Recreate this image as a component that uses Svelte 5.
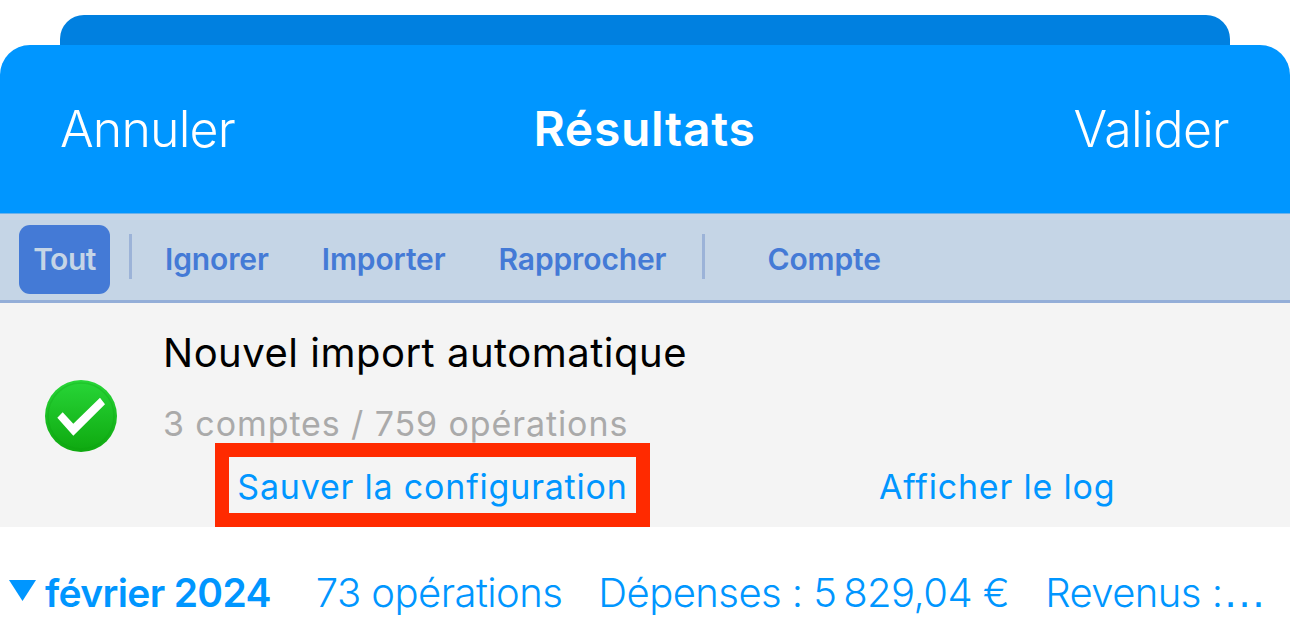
<script>
	// toolbar filters, first group is the selected one
	const filters = ["Ignorer", "Importer", "Rapprocher"];
</script>

<div class="page">
	<div class="sheet-back"></div>

	<header class="nav">
		<span class="nav-btn">Annuler</span>
		<span class="nav-title">Résultats</span>
		<span class="nav-btn right">Valider</span>
	</header>

	<div class="toolbar">
		<span class="tout">Tout</span>
		<span class="sep first"></span>
		<div class="filters">
			{#each filters as f}
				<span class="filter">{f}</span>
			{/each}
		</div>
		<span class="sep second"></span>
		<span class="filter compte">Compte</span>
	</div>

	<section class="panel">
		<div class="status">
			<svg width="74" height="74" viewBox="0 0 74 74">
				<defs>
					<linearGradient id="g" x1="0" y1="0" x2="0" y2="1">
						<stop offset="0" stop-color="#28d638" />
						<stop offset="1" stop-color="#0ea80f" />
					</linearGradient>
				</defs>
				<circle cx="37" cy="37" r="36" fill="url(#g)" />
				<circle cx="37" cy="37" r="33" fill="none" stroke="#0a9a10" stroke-opacity="0.25" stroke-width="1.5" />
				<path d="M13.3 38.7 L18.7 33.3 L29.3 44.7 L56 18.7 L61 25.3 L29.3 56.7 Z" fill="#fff" />
			</svg>
		</div>
		<div class="info">
			<div class="title">Nouvel import automatique</div>
			<div class="sub">3 comptes / 759 opérations</div>
			<div class="links">
				<span class="link boxed">Sauver la configuration</span>
				<span class="link log">Afficher le log</span>
			</div>
		</div>
	</section>

	<div class="month">
		<svg class="tri" width="28" height="21" viewBox="0 0 28 21"><path d="M0 0 H27 L13.5 21 Z" fill="#0096ff" /></svg>
		<span class="month-name">février 2024</span>
		<span class="stat ops">73 opérations</span>
		<span class="stat dep">Dépenses : 5&#8201;829,04 €</span>
		<span class="stat rev">Revenus :<span class="dots">…</span></span>
	</div>
</div>

<style>
	:global(body) {
		margin: 0;
		background: #fff;
		font-family: Inter, "Liberation Sans", sans-serif;
	}
	.page {
		width: 1290px;
		height: 641px;
		overflow: hidden;
		padding-top: 15px;
		box-sizing: border-box;
	}
	.sheet-back {
		height: 30px;
		margin: 0 60px;
		background: #0080e0;
		border-radius: 24px 24px 0 0;
	}
	.nav {
		height: 169px;
		background: #0096ff;
		border-radius: 30px 30px 0 0;
		display: grid;
		grid-template-columns: 1fr auto 1fr;
		align-items: start;
		padding: 54px 61px 0 60px;
		box-sizing: border-box;
		color: #fff;
		border-bottom: 1px solid #6db2ea;
	}
	.nav-btn {
		font-size: 50px;
		line-height: 60px;
		font-weight: 300;
		letter-spacing: -0.8px;
	}
	.right {
		text-align: right;
		letter-spacing: -0.5px;
	}
	.nav-title {
		font-size: 48px;
		line-height: 60px;
		font-weight: 600;
		letter-spacing: 0.7px;
	}
	.toolbar {
		height: 89px;
		box-sizing: border-box;
		background: #c5d5e6;
		border-bottom: 3px solid #94aed8;
		display: flex;
		align-items: center;
		padding-left: 19px;
		padding-top: 4px;
		color: #447ad6;
		font-size: 30px;
		font-weight: 600;
	}
	.tout {
		width: 91px;
		height: 69px;
		line-height: 69px;
		text-align: center;
		background: #447ad6;
		color: #c5d5e6;
		border-radius: 11px;
		letter-spacing: -0.5px;
	}
	.sep {
		width: 3px;
		height: 45px;
		margin-bottom: 5px;
		background: #9cb3d8;
	}
	.sep.first {
		margin-left: 19px;
		margin-right: 33px;
	}
	.sep.second {
		margin-left: 36px;
		margin-right: 62px;
	}
	.filters {
		display: flex;
		gap: 53px;
	}
	.filter {
		letter-spacing: -0.12px;
	}
	.panel {
		height: 224px;
		background: #f4f4f4;
		display: flex;
	}
	.status {
		width: 163px;
		box-sizing: border-box;
		padding: 76px 0 0 44px;
	}
	.info {
		flex: 1;
		display: flex;
		flex-direction: column;
	}
	.title {
		font-size: 40px;
		line-height: 48px;
		margin-top: 26px;
		font-weight: 400;
		color: #000;
		letter-spacing: 0.5px;
	}
	.sub {
		font-size: 34px;
		line-height: 42px;
		margin-top: 26px;
		color: #aaa;
		letter-spacing: 0.9px;
	}
	.links {
		display: flex;
		margin-top: -2px;
		margin-left: 52px;
		font-size: 34px;
		color: #0096ff;
		letter-spacing: 0.8px;
	}
	.link {
		white-space: nowrap;
	}
	.boxed {
		box-sizing: border-box;
		width: 435px;
		height: 84px;
		border: 14px solid #ff2a00;
		text-align: center;
		line-height: 60px;
	}
	.log {
		margin-left: 229px;
		line-height: 88px;
	}
	.month {
		display: flex;
		align-items: center;
		box-sizing: border-box;
		height: 114px;
		padding: 16px 0 0 9px;
		color: #0096ff;
		white-space: nowrap;
	}
	.tri {
		margin-right: 8px;
		margin-bottom: 3px;
	}
	.month-name {
		font-size: 39px;
		font-weight: 600;
		letter-spacing: -0.65px;
	}
	.stat {
		font-size: 40px;
		font-weight: 300;
		letter-spacing: -0.55px;
	}
	.ops {
		margin-left: 45px;
	}
	.dep {
		margin-left: 36px;
	}
	.rev {
		margin-left: 36px;
	}
	.dots {
		font-family: "Liberation Sans", sans-serif;
		font-size: 44px;
	}
</style>
